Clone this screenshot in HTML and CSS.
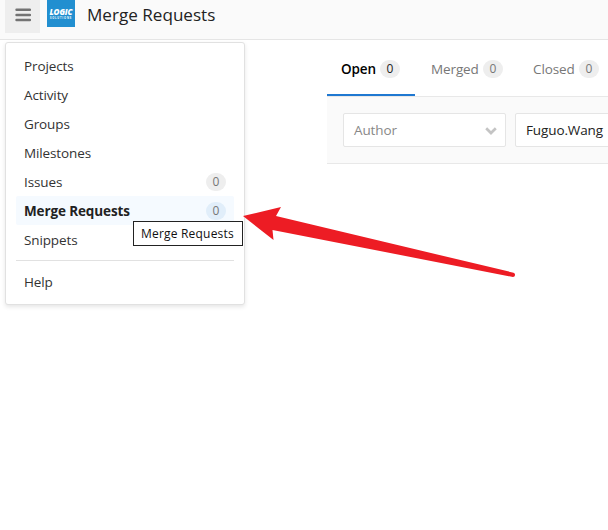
FILE: index.html
```html
<!DOCTYPE html>
<html lang="en">
<head>
<meta charset="utf-8">
<title>Merge Requests</title>
<link rel="stylesheet" href="styles.css">
</head>
<body>
<header class="topbar">
  <button class="menu-toggle" aria-label="Menu">
    <svg width="16" height="14" viewBox="0 0 16 14"><path d="M1.500 1.700h13.500M1.500 7h13.500M1.500 12h13.500" stroke="#737373" stroke-width="2.4" stroke-linecap="round"/></svg>
  </button>
  <div class="logo"><span class="logo-name">LOGIC</span><span class="logo-sub">SOLUTIONS</span></div>
  <h1 class="title">Merge Requests</h1>
</header>
<main class="content">
  <nav class="tabs">
    <a class="tab active"><span>Open</span><span class="badge">0</span></a>
    <a class="tab"><span>Merged</span><span class="badge">0</span></a>
    <a class="tab closed"><span>Closed</span><span class="badge">0</span></a>
  </nav>
  <div class="filters">
    <div class="select"><span>Author</span>
      <svg width="12" height="9" viewBox="0 0 12 9"><path d="M1.200 2.200L6 7L10.800 2.200" fill="none" stroke="#c4c4c4" stroke-width="2.7"/></svg>
    </div>
    <div class="select chosen"><span>Fuguo.Wang</span></div>
  </div>
</main>
<nav class="dropdown">
  <a class="item"><span>Projects</span></a>
  <a class="item"><span>Activity</span></a>
  <a class="item"><span>Groups</span></a>
  <a class="item"><span>Milestones</span></a>
  <a class="item"><span>Issues</span><span class="badge">0</span></a>
  <a class="item current"><span>Merge Requests</span><span class="badge">0</span></a>
  <a class="item"><span>Snippets</span></a>
  <hr class="divider">
  <a class="item"><span>Help</span></a>
</nav>
<div class="tooltip">Merge Requests</div>
<svg class="arrow" width="280" height="80" viewBox="240 200 280 80"><path d="M243 216L281 207L276 216L513.500 272.700A2.200 2.200 0 0 1 513 277L272.500 230L273.500 240Z" fill="#ed1c24"/></svg>
</body>
</html>
```
FILE: styles.css
```css
* { box-sizing: border-box; }
body {
  margin: 0;
  height: 530px;
  overflow: hidden;
  background: #fff;
  color: #333;
  font: 13.5px/20px "Open Sans", "Noto Sans", sans-serif;
  letter-spacing: -0.12px;
}
.topbar {
  display: flex;
  align-items: flex-start;
  height: 40px;
  padding-left: 5px;
  background: #fafafa;
  border-bottom: 1px solid #e5e5e5;
}
.menu-toggle {
  display: flex;
  justify-content: center;
  width: 35px;
  height: 33px;
  padding: 8px 0 0;
  border: 0;
  background: #eee;
}
.logo {
  display: flex;
  flex-direction: column;
  align-items: center;
  width: 28px;
  height: 27px;
  margin-left: 7px;
  padding-top: 7px;
  background: #228fd0;
  color: #fff;
}
.logo-name { font: italic 800 8px/9px "Open Sans", sans-serif; letter-spacing: -0.1px; }
.logo-sub { margin-top: 1px; font: bold 2.6px/2px "Open Sans", sans-serif; letter-spacing: 0.8px; }
.title {
  margin: 0 0 0 12px;
  font-size: 17.1px;
  font-weight: 400;
  letter-spacing: 0;
  line-height: 29px;
  color: #222;
}
.content { overflow: hidden; margin-left: 327px; }
.tabs {
  display: flex;
  height: 57px;
  border-bottom: 1px solid #e8e8e8;
}
.tab {
  display: flex;
  flex: none;
  align-items: center;
  justify-content: space-between;
  width: 102px;
  height: 56px;
  padding: 2px 14px 0 16px;
  color: #777;
}
.tab.closed { width: 98px; }
.tab.active {
  width: 88px;
  padding: 4px 15px 0 14px;
  border-bottom: 2px solid #1f78d1;
  color: #000;
  font-weight: 600;
}
.badge {
  width: 20px;
  height: 18px;
  border-radius: 9px;
  background: #eee;
  color: #777;
  font-size: 12px;
  font-weight: 400;
  letter-spacing: 0;
  line-height: 18px;
  text-align: center;
}
.tab.active .badge { color: #222; }
.tab.closed { width: 96px; }
.filters {
  display: flex;
  gap: 9px;
  height: 67px;
  padding: 16px;
  background: #fafafa;
  border-bottom: 1px solid #e8e8e8;
}
.select {
  display: flex;
  flex: none;
  align-items: center;
  justify-content: space-between;
  width: 163px;
  height: 34px;
  padding: 0 8px 0 10px;
  border: 1px solid #e5e5e5;
  border-radius: 2px;
  background: #fff;
  color: #888;
}
.chosen { color: #222; }
.dropdown {
  position: absolute;
  left: 5px;
  top: 42px;
  width: 240px;
  height: 263px;
  padding: 8px 10px;
  border: 1px solid #e1e1e1;
  border-radius: 3px;
  background: #fff;
  box-shadow: 0 2px 4px rgba(0, 0, 0, .1);
}
.item {
  display: flex;
  align-items: center;
  justify-content: space-between;
  height: 29px;
  padding: 0 8px;
  border-radius: 2px;
}
.current { background: #f5faff; color: #222; font-weight: 700; }
.current .badge { background: #e1eefa; }
.divider { height: 1px; margin: 6px 0; border: 0; background: #e1e1e1; }
.tooltip {
  position: absolute;
  left: 133px;
  top: 221px;
  width: 110px;
  height: 25px;
  padding-left: 7px;
  border: 1px solid #222;
  background: #fff;
  color: #111;
  font-size: 12px;
  letter-spacing: 0.2px;
  line-height: 24px;
  white-space: nowrap;
}
.arrow { position: absolute; left: 240px; top: 200px; }
```
